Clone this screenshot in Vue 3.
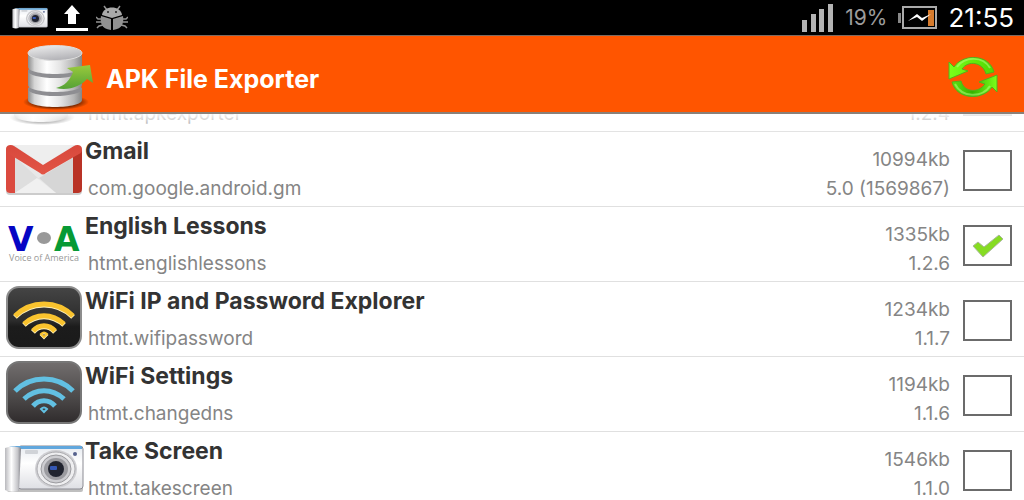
<template>
  <div class="screen">
    <svg class="sprite" width="0" height="0" aria-hidden="true">
      <defs>
        <linearGradient id="metal" x1="0" x2="1" y1="0" y2="0">
          <stop offset="0" stop-color="#8c8c8c" />
          <stop offset="0.12" stop-color="#d5d5d5" />
          <stop offset="0.35" stop-color="#ffffff" />
          <stop offset="0.6" stop-color="#e4e4e4" />
          <stop offset="0.85" stop-color="#b5b5b5" />
          <stop offset="1" stop-color="#858585" />
        </linearGradient>
        <linearGradient id="metalTop" x1="0" x2="0.4" y1="0" y2="1">
          <stop offset="0" stop-color="#f1f1f1" />
          <stop offset="1" stop-color="#b4b4b8" />
        </linearGradient>
        <linearGradient id="arrowFill" x1="0" x2="0" y1="0" y2="1">
          <stop offset="0" stop-color="#9aca3c" />
          <stop offset="1" stop-color="#55a236" />
        </linearGradient>
        <radialGradient id="baseShadow">
          <stop offset="0.7" stop-color="#000" stop-opacity="0.5" />
          <stop offset="1" stop-color="#000" stop-opacity="0" />
        </radialGradient>
        <linearGradient id="camBody" x1="0" x2="0" y1="0" y2="1">
          <stop offset="0" stop-color="#e6eaf0" />
          <stop offset="0.4" stop-color="#ffffff" />
          <stop offset="1" stop-color="#dedfe4" />
        </linearGradient>
        <linearGradient id="camGrip" x1="0" x2="1" y1="0" y2="0">
          <stop offset="0" stop-color="#b9b9bd" />
          <stop offset="0.4" stop-color="#ffffff" />
          <stop offset="0.8" stop-color="#c4c4c8" />
          <stop offset="1" stop-color="#808086" />
        </linearGradient>
        <linearGradient id="tileDark" x1="0" x2="0" y1="0" y2="1">
          <stop offset="0" stop-color="#454545" />
          <stop offset="0.55" stop-color="#2c2c2c" />
          <stop offset="0.65" stop-color="#1c1c1c" />
          <stop offset="1" stop-color="#1a1a1a" />
        </linearGradient>
        <linearGradient id="tileGrey" x1="0" x2="0" y1="0" y2="1">
          <stop offset="0" stop-color="#726e6e" />
          <stop offset="0.6" stop-color="#4b4848" />
          <stop offset="1" stop-color="#2f2b2c" />
        </linearGradient>
        <linearGradient id="flap" x1="0" x2="0" y1="0" y2="1">
          <stop offset="0" stop-color="#d8483c" />
          <stop offset="1" stop-color="#e25546" />
        </linearGradient>
        <linearGradient id="refreshTop" x1="0" x2="1" y1="0" y2="0">
          <stop offset="0" stop-color="#7cff1a" />
          <stop offset="1" stop-color="#4fd800" />
        </linearGradient>
        <linearGradient id="refreshBottom" x1="0" x2="1" y1="0" y2="0">
          <stop offset="0" stop-color="#5fe010" />
          <stop offset="0.45" stop-color="#35b400" />
          <stop offset="1" stop-color="#7cff1a" />
        </linearGradient>
      </defs>

      <symbol id="icon-database" viewBox="0 0 80 65">
        <ellipse cx="38" cy="57" rx="33" ry="8" fill="url(#baseShadow)" />
        <path d="M10 43v12c0 4 12 7 27 7s27-3 27-7V43z" fill="url(#metal)" />
        <ellipse cx="37" cy="44" rx="27" ry="7" fill="#8e8e92" />
        <path d="M10 25v15c0 4 12 7 27 7s27-3 27-7V25z" fill="url(#metal)" />
        <ellipse cx="37" cy="26" rx="27" ry="7" fill="#8e8e92" />
        <path d="M10 8v14c0 4 12 7 27 7s27-3 27-7V8z" fill="url(#metal)" />
        <ellipse cx="37" cy="8" rx="27" ry="7.500" fill="url(#metalTop)" stroke="#dedede" />
        <path
          d="M38 43c9-2 14-8 17-16l-6-4 23-3 3 18-6-4c-6 7-18 12-31 9z"
          fill="url(#arrowFill)"
        />
      </symbol>

      <symbol id="icon-gmail" viewBox="0 -2 80 65">
        <rect x="2" y="9" width="76" height="49" rx="4" fill="#000" opacity="0.2" />
        <rect x="2" y="8" width="76" height="48" rx="4" fill="#e8e8e8" />
        <path d="M11 20l24 22-24 14z" fill="#dedede" />
        <path d="M70 20v36H52L35 41z" fill="#d6d6d6" />
        <path d="M11 56 33 41l19 15z" fill="#f0f0f0" />
        <path d="M2 12v40c0 3 2 4 4 4h5V18z" fill="#db4a3f" />
        <path d="M78 12v40c0 3-2 4-4 4h-5V18z" fill="#b93326" />
        <path d="M10 8h60L39 28z" fill="#eeeeee" />
        <path
          d="M2 12c0-4 5-5 8-3l29 19 31-19c3-2 8-1 8 3 0 3-1 4-3 5L42 36c-2 2-4 2-6 0L5 17c-2-1-3-2-3-5z"
          fill="url(#flap)"
        />
      </symbol>

      <symbol id="wifi-arcs" viewBox="0 0 80 65">
        <path d="M11 31C27 15 53 15 69 31" stroke-width="5" />
        <path d="M20 39c12-11 28-11 40 0" stroke-width="5" />
        <path d="M29 46c6-7 16-7 22 0" stroke-width="5" />
        <path class="dot" d="M37 49q3-3 6 0l-3 3z" />
      </symbol>

      <symbol id="icon-wifi-yellow" viewBox="0 0 80 65">
        <rect x="3" y="2" width="74" height="61" rx="12" fill="url(#tileDark)" stroke="#8d8d8d" stroke-width="2" />
        <use href="#wifi-arcs" class="arcs-glow" y="1" />
        <use href="#wifi-arcs" class="arcs-yellow" />
      </symbol>

      <symbol id="icon-wifi-blue" viewBox="0 0 80 65">
        <rect x="3" y="2" width="74" height="61" rx="12" fill="url(#tileGrey)" stroke="#777" stroke-width="2" />
        <use href="#wifi-arcs" class="arcs-blue" />
      </symbol>

      <symbol id="icon-camera" viewBox="0 0 80 65">
        <rect x="3" y="52" width="76" height="5" rx="2" fill="#000" opacity="0.25" />
        <rect x="14" y="11" width="65" height="43" rx="3" fill="url(#camBody)" stroke="#8b8b93" />
        <path d="M5 11h73v3H16z" fill="#61a7dd" />
        <path d="M1 13c5-2 10-2 16 0l-2 43c-5 1-10 1-14-1z" fill="url(#camGrip)" />
        <rect x="21" y="15" width="13" height="4" rx="1" fill="#d0d3d8" />
        <circle cx="71" cy="19" r="2" fill="#55618d" />
        <ellipse cx="52" cy="34" rx="21" ry="19" fill="#cfcfd3" />
        <ellipse cx="52" cy="34" rx="19" ry="17" fill="#eeeef0" stroke="#aaaaae" />
        <ellipse cx="52" cy="34" rx="15" ry="14" fill="#cdcdd1" stroke="#9b9b9f" />
        <ellipse cx="52" cy="34" rx="12" ry="11" fill="#9b9ba0" />
        <ellipse cx="52" cy="34" rx="8" ry="8" fill="#20232f" />
        <rect x="46" y="31" width="7" height="4" rx="1" fill="#3558b5" />
      </symbol>
    </svg>

    <div class="status-bar">
      <div class="status-group">
        <svg class="status-camera" viewBox="0 8 80 50" preserveAspectRatio="none" aria-hidden="true">
          <use href="#icon-camera" width="80" height="65" />
        </svg>
        <svg width="32" height="26" viewBox="0 0 32 26" aria-hidden="true">
          <path d="M16 0l8 9h-4v10h-8V9H8z" fill="#fff" />
          <rect x="0" y="23" width="32" height="3" fill="#fff" />
        </svg>
        <svg width="32" height="26" viewBox="0 0 32 26" aria-hidden="true">
          <g fill="none" stroke="#929292" stroke-width="1.500">
            <path d="M8 1l3 4M24 1l-3 4M6 14H2L0 12M5 17H0M7 20l-4 1-2 2M26 14h4l2-2M27 17h5M25 20l4 1 2 2" />
          </g>
          <path d="M6 10c1-10 19-10 20 0l-10 3z" fill="#aaa" />
          <path d="M5 11l10 3v11C5 24 4 17 5 11zM27 11l-10 3v11c10-1 11-8 10-14z" fill="#929292" />
          <circle cx="12" cy="7" r="1" fill="#222" />
          <circle cx="20" cy="7" r="1" fill="#222" />
        </svg>
      </div>
      <div class="status-group status-right">
        <svg width="32" height="28" viewBox="0 0 32 28" fill="#b4b4b4" aria-hidden="true">
          <rect x="0" y="16" width="5" height="12" />
          <rect x="9" y="10" width="5" height="18" />
          <rect x="17" y="5" width="5" height="23" />
          <rect x="26" y="0" width="5" height="28" />
        </svg>
        <span class="battery-level">19%</span>
        <svg width="39" height="24" viewBox="0 0 39 24" aria-hidden="true">
          <rect x="0" y="7" width="3" height="10" fill="#888" />
          <rect x="5" y="1" width="33" height="21" fill="none" stroke="#aaa" stroke-width="2" />
          <rect x="30" y="4" width="6" height="16" fill="#d67b2d" />
          <path d="M10 15l9-7 5 4 9-4-9 7-5-4z" fill="#fff" />
        </svg>
        <span class="clock">21:55</span>
      </div>
    </div>

    <header class="app-header">
      <svg class="app-logo" viewBox="0 0 80 65" aria-hidden="true">
        <use href="#icon-database" />
      </svg>
      <h1 class="app-title">APK File Exporter</h1>
      <button class="refresh" type="button" aria-label="Refresh">
        <svg width="52" height="44" viewBox="0 0 52 44" aria-hidden="true">
          <path
            d="M2 7l5 5C15-1 42-2 47 17l-8 2C36 7 21 5 15 14l6 2L2 24z"
            fill="url(#refreshTop)"
            stroke="#54b01c"
          />
          <path
            d="M50 37l-5-5C37 45 10 46 5 27l9-1c3 12 18 12 24 3l-6-2 18-7z"
            fill="url(#refreshBottom)"
            stroke="#54b01c"
          />
          <path d="M10 12C18 1 36 1 43 13M8 29c7 14 27 14 35 2" fill="none" stroke="#b9ff8a" stroke-width="2" opacity="0.5" />
        </svg>
      </button>
    </header>

    <main class="list-view">
      <ul class="app-list">
        <li v-for="app in apps" :key="app.pkg" class="app-row">
          <svg class="app-icon" viewBox="0 0 80 65" aria-hidden="true">
            <g v-if="app.icon === 'voa'">
              <text class="logo-v" x="4" y="41">V</text>
              <ellipse cx="40" cy="28" rx="7" ry="6" fill="#999" />
              <text class="logo-a" x="50" y="41">A</text>
              <text class="logo-caption" x="40" y="51">Voice of America</text>
            </g>
            <use v-else :href="`#icon-${app.icon}`" />
          </svg>
          <div class="info">
            <label v-if="app.name" class="name" :for="app.pkg">{{ app.name }}</label>
            <label class="pkg" :for="app.pkg">{{ app.pkg }}</label>
          </div>
          <div class="meta">
            <span v-if="app.size">{{ app.size }}</span>
            <span>{{ app.version }}</span>
          </div>
          <div class="check">
            <input :id="app.pkg" v-model="app.checked" type="checkbox" />
            <svg v-if="app.checked" width="34" height="24" viewBox="0 0 34 24" aria-hidden="true">
              <path
                d="M2 12l5-4 6 5L28 1l4 4-20 18z"
                fill="#86dc22"
                stroke="#a9b79a"
                stroke-linejoin="round"
              />
            </svg>
          </div>
        </li>
      </ul>
    </main>
  </div>
</template>

<script setup>
import { ref } from 'vue'

const apps = ref([
  { name: '', pkg: 'htmt.apkexporter', size: '', version: '1.2.4', icon: 'database', checked: false },
  { name: 'Gmail', pkg: 'com.google.android.gm', size: '10994kb', version: '5.0 (1569867)', icon: 'gmail', checked: false },
  { name: 'English Lessons', pkg: 'htmt.englishlessons', size: '1335kb', version: '1.2.6', icon: 'voa', checked: true },
  { name: 'WiFi IP and Password Explorer', pkg: 'htmt.wifipassword', size: '1234kb', version: '1.1.7', icon: 'wifi-yellow', checked: false },
  { name: 'WiFi Settings', pkg: 'htmt.changedns', size: '1194kb', version: '1.1.6', icon: 'wifi-blue', checked: false },
  { name: 'Take Screen', pkg: 'htmt.takescreen', size: '1546kb', version: '1.1.0', icon: 'camera', checked: false }
])
</script>

<style>
body {
  margin: 0;
  background: #fff;
}
</style>

<style scoped>
.screen {
  display: flex;
  flex-direction: column;
  height: 100vh;
  overflow: hidden;
  font-family: Inter, Roboto, sans-serif;
  background: #fff;
}

.sprite {
  position: absolute;
}

.status-bar {
  display: flex;
  flex: none;
  align-items: center;
  justify-content: space-between;
  box-sizing: border-box;
  height: 36px;
  padding: 0 10px 0 12px;
  background: #000;
  border-bottom: 1px solid #7d6a60;
}

.status-group {
  display: flex;
  align-items: center;
  gap: 8px;
}

.status-camera {
  width: 36px;
  height: 22px;
}

.status-right {
  gap: 11px;
}

.battery-level {
  font-size: 21px;
  color: #9c9c9c;
}

.clock {
  font-size: 26px;
  color: #fff;
}

.app-header {
  display: flex;
  flex: none;
  align-items: center;
  box-sizing: border-box;
  height: 78px;
  padding: 6px 25px 0 18px;
  background: #ff5500;
  border-bottom: 2px solid #8a8078;
}

.app-logo {
  width: 80px;
  height: 65px;
}

.app-title {
  flex: 1;
  margin: 0;
  padding: 4px 0 0 8px;
  font-size: 25px;
  line-height: 28px;
  font-weight: 700;
  color: #fff;
}

.refresh {
  display: flex;
  padding: 0;
  background: none;
  border: 0;
  cursor: pointer;
}

.list-view {
  position: relative;
  flex: 1;
  min-height: 0;
  overflow: hidden;
}

/* fading edge under the header */
.list-view::before {
  content: '';
  position: absolute;
  top: 0;
  left: 0;
  right: 0;
  height: 20px;
  background: linear-gradient(rgba(255, 255, 255, 0.9), rgba(255, 255, 255, 0));
}

/* list is scrolled past most of the first row */
.app-list {
  margin: -57px 0 0;
  padding: 0;
  list-style: none;
}

.app-row {
  display: flex;
  align-items: flex-end;
  box-sizing: border-box;
  height: 75px;
  padding: 0 12px 6px 4px;
  border-bottom: 1px solid #e0e0e0;
}

.app-icon {
  flex: none;
  width: 80px;
  height: 65px;
}

.info {
  display: flex;
  flex: 1;
  flex-direction: column;
  gap: 15px;
  padding-left: 1px;
}

.name {
  font-size: 23px;
  line-height: 24px;
  font-weight: 700;
  color: #333;
}

.pkg {
  padding-left: 3px;
  font-size: 19px;
  line-height: 22px;
  color: #858585;
}

.meta {
  display: flex;
  flex-direction: column;
  gap: 7px;
  margin-right: 13px;
  font-size: 19px;
  line-height: 22px;
  text-align: right;
  color: #858585;
}

.check {
  display: grid;
  place-items: center;
  align-self: center;
  padding-top: 9px;
}

.check > * {
  grid-area: 1 / 1;
}

.check input {
  appearance: none;
  box-sizing: border-box;
  width: 49px;
  height: 41px;
  margin: 0;
  background: #fff;
  border: 2px solid #6b6b6b;
}

.check svg {
  pointer-events: none;
}

.arcs-yellow {
  fill: none;
  stroke: #f9c32e;
}

.arcs-glow {
  fill: none;
  stroke: #fff2bd;
}

.arcs-blue {
  fill: none;
  stroke: #62c0e2;
}

.dot {
  stroke-width: 2px;
}

.logo-v,
.logo-a {
  font-family: 'DejaVu Sans', sans-serif;
  font-size: 33px;
  font-weight: 700;
}

.logo-v {
  fill: #0505c4;
}

.logo-a {
  fill: #079a35;
}

.logo-caption {
  font-family: 'Open Sans', sans-serif;
  font-size: 9px;
  text-anchor: middle;
  fill: #999;
}
</style>
